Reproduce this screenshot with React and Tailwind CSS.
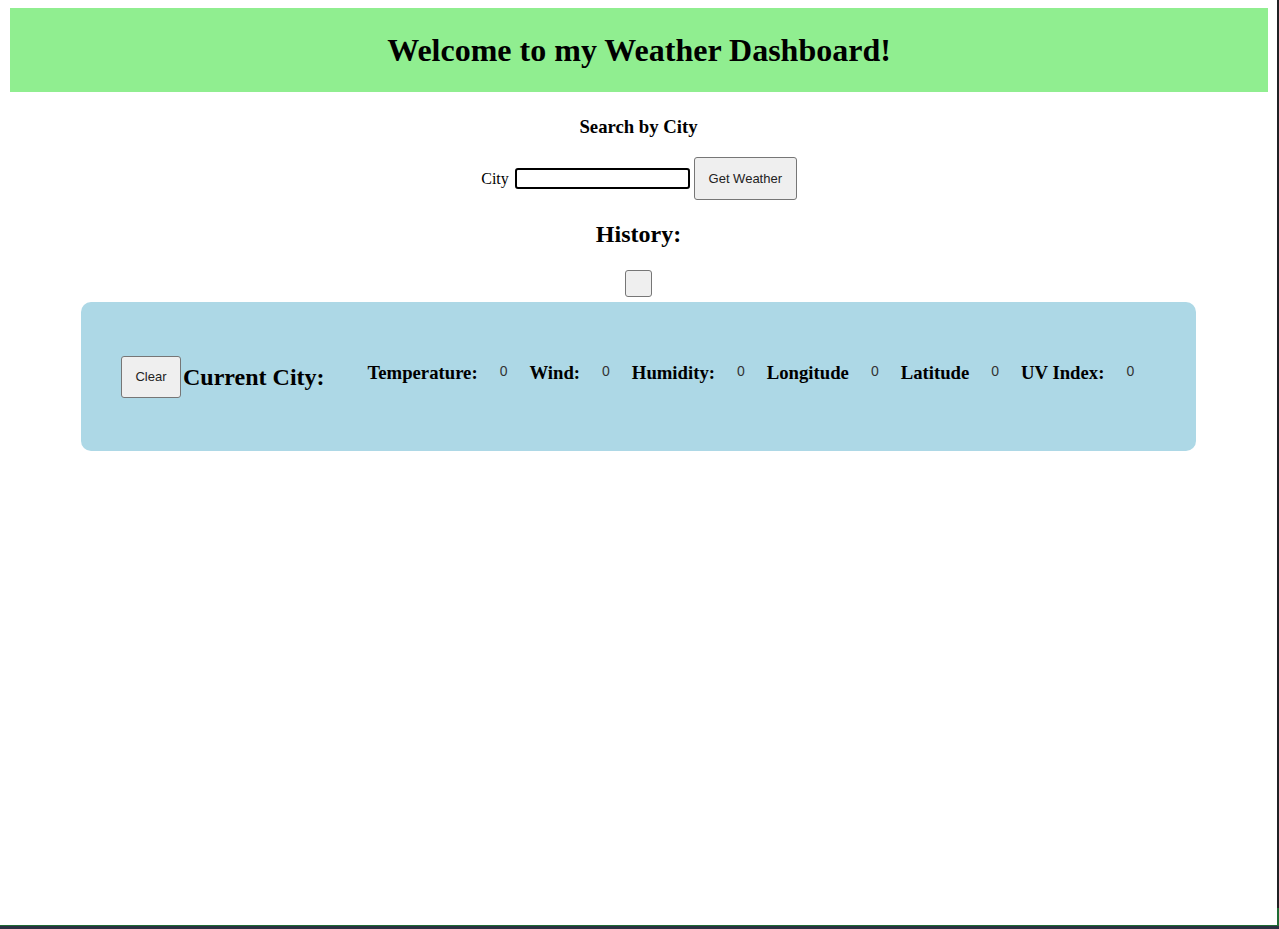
const serif = { fontFamily: '"Liberation Serif", "Times New Roman", serif' };

function Stat({ label, value = 0 }) {
  return (
    <>
      <span className="text-[18.72px] font-bold text-black">{label}</span>
      <span className="text-[14px] text-[#333] font-['Liberation_Sans',Arial,sans-serif] -mt-[3px]">{value}</span>
    </>
  );
}

export default function App() {
  return (
    <div className="h-[929px] flex flex-col bg-white" style={serif}>
      <div className="flex-1 flex min-h-0">
        <div className="flex-1 flex flex-col">
          <header className="mt-[8px] ml-[10px] mr-[9px] h-[84px] bg-[#90ee90] flex items-center justify-center">
            <h1 className="text-[32px] font-bold text-black leading-none -mt-[1px]">Welcome to my Weather Dashboard!</h1>
          </header>

          <div className="flex flex-col items-center">
            <h3 className="mt-[24px] text-[18.72px] font-bold leading-[21px]">Search by City</h3>
            <div className="mt-[20px] flex items-center gap-[4px] ml-[1px]">
              <label className="text-[16px] mr-[2px]">City</label>
              <input className="w-[175px] h-[21px] border-2 border-black rounded-[3px] bg-white" />
              <button className="w-[103px] h-[43px] bg-[#efefef] border border-[#767676] rounded-[3px] text-[13px] text-[#222] font-['Liberation_Sans',Arial,sans-serif]">
                Get Weather
              </button>
            </div>
            <h2 className="mt-[21px] text-[24px] font-bold leading-[27px]">History:</h2>
            <button className="mt-[22px] w-[27px] h-[27px] bg-[#efefef] border border-[#767676] rounded-[3px]" />
          </div>

          <section className="mt-[5px] ml-[81px] w-[1115px] h-[149px] bg-[#add8e6] rounded-[10px] flex items-center pl-[40px]">
            <button className="w-[60px] h-[42px] bg-[#efefef] border border-[#767676] rounded-[3px] text-[13px] text-[#222] font-['Liberation_Sans',Arial,sans-serif]">
              Clear
            </button>
            <h2 className="ml-[2px] text-[24px] font-bold leading-none">Current City:</h2>
            <div className="ml-[43px] flex items-center gap-[22px] -mt-[6px]">
              <Stat label="Temperature:" />
              <Stat label="Wind:" />
              <Stat label="Humidity:" />
              <Stat label="Longitude" />
              <Stat label="Latitude" />
              <Stat label="UV Index:" />
            </div>
          </section>
        </div>
        <div className="w-[2px] flex flex-col">
          <div className="flex-1 bg-[#202124]" />
          <div className="h-[17px] bg-[#1e6b34]" />
        </div>
      </div>
      <div className="h-[1px] bg-[#1e6b34]" />
      <div className="h-[3px] bg-[#2b3142]" />
    </div>
  );
}
